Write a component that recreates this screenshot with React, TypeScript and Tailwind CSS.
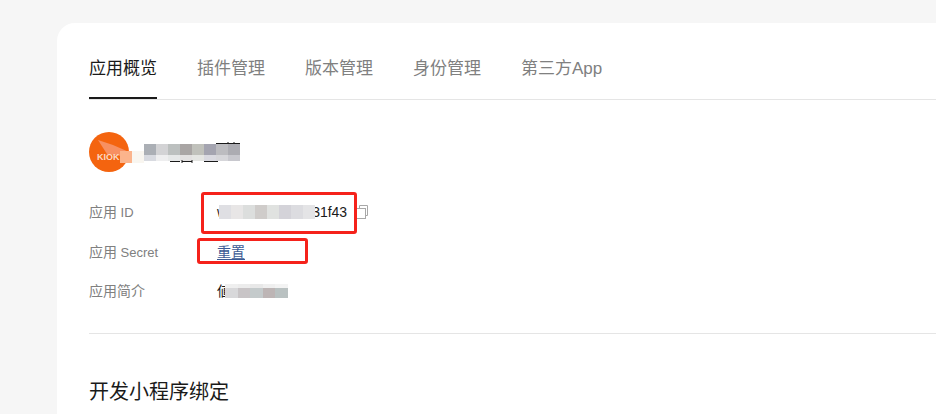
const TABS = ['应用概览', '插件管理', '版本管理', '身份管理', '第三方App']

const NAME_TOP = [
  'bg-[#abafb5]',
  'bg-[#d3d3d5]',
  'bg-[#bcc0bf]',
  'bg-[#a9a5a4]',
  'bg-[#c0c1bb]',
  'bg-[#a4a4b0]',
  'bg-[#bcbcc0]',
  'bg-[#acacb2]',
]

const NAME_BOTTOM = [
  'bg-[#d8dae0]',
  'bg-[#eeeeef]',
  'bg-[#e6e8e8]',
  'bg-[#e2e0e0]',
  'bg-[#e4e5e2]',
  'bg-[#d9d9e0]',
  'bg-[#d6d6da]',
  'bg-[#c8c8ce]',
]

const ID_BLOCKS = [
  'bg-[#dfdfe3]',
  'bg-[#e8e6e6]',
  'bg-[#dcdedd]',
  'bg-[#cfccca]',
  'bg-[#e0e2e0]',
  'bg-[#d4d3d9]',
  'bg-[#dcdce0]',
  'bg-[#e4e4e6]',
]

const INTRO_TOP = ['bg-[#efefef]', 'bg-[#ececec]', 'bg-[#e8e8e8]', 'bg-[#efefef]', 'bg-[#f3f3f3]']
const INTRO_BOTTOM = ['bg-[#d8d8da]', 'bg-[#c8c4c6]', 'bg-[#c4cacb]', 'bg-[#bdb5b5]', 'bg-[#b9c1c1]']

function Mosaic({ blocks, className }: { blocks: string[]; className: string }) {
  return (
    <span className={`relative flex ${className}`}>
      {blocks.map((b, i) => (
        <span key={i} className={`flex-1 ${b}`} />
      ))}
    </span>
  )
}

function CopyIcon() {
  return (
    <svg width="12" height="14" viewBox="0 0 12 14" fill="none" stroke="#a8a8a8" className="ml-[9px]">
      <path d="M3.5 3.5V0.5H11.5V10.5H9.5" />
      <rect x="0.5" y="3.5" width="9" height="10" />
    </svg>
  )
}

export default function App() {
  return (
    <div className="h-[414px] w-[936px] overflow-hidden bg-[#f6f6f6] pl-[57px] pt-[23px] font-['Liberation_Sans','Noto_Sans_CJK_SC',sans-serif]">
      <div className="h-[500px] w-[1000px] rounded-tl-[18px] bg-white pl-[32px] pt-[28px]">
        {/* Tabs */}
        <div className="flex h-[49px] gap-[40px] border-b border-[#e5e5e5]">
          {TABS.map((tab, i) => (
            <div
              key={tab}
              className={
                i === 0
                  ? 'h-[48px] border-b-2 border-[#1a1a1a] text-[17px] leading-[36px] text-[#1a1a1a]'
                  : 'text-[17px] leading-[36px] text-[#808080]'
              }
            >
              {tab}
            </div>
          ))}
        </div>

        {/* App name */}
        <div className="mt-[32px] flex h-[40px] items-start">
          <div className="relative h-[40px] w-[40px] shrink-0 overflow-hidden rounded-full bg-[#f4640f]">
            <svg viewBox="0 0 40 40" className="absolute inset-0 h-full w-full">
              <path d="M9 8 L24 13 L40 20 L32 24 L18 22 Z" fill="#f79062" />
            </svg>
            <span className="absolute left-[8px] top-[20px] text-[9px] font-bold leading-[11px] text-[#fbd9c4]">KIOK</span>
          </div>
          <span className="relative ml-[-9px] mt-[19px] h-[12px] w-[12px] bg-[#fbb48c]" />
          <span className="mt-[19px] h-[12px] w-[12px] bg-[#f9f6f0]" />
          <div className="relative mt-[12px] w-[96px]">
            <Mosaic blocks={NAME_TOP} className="h-[11px]" />
            <Mosaic blocks={NAME_BOTTOM} className="h-[6px]" />
            {/* bits of the name showing past the mosaic */}
            <svg width="96" height="22" viewBox="0 0 96 22" fill="none" stroke="#1a1a1a" className="absolute -top-[2px] left-0">
              <path d="M72 1.5H78M84 0V2M90 0V2M75 1.5H96" strokeWidth="1" />
              <path d="M26 19.5H36M38 19.5H48M38 18V21M48 18V21M60 19.5H74" strokeWidth="1" />
            </svg>
          </div>
        </div>

        {/* Info rows */}
        <div className="mt-[30px] flex h-[20px] items-center text-[14px] text-[#808080]">
          <div className="w-[128px]">
            应用<span className="text-[13px]"> ID</span>
          </div>
          <div className="flex items-center text-[#1a1a1a]">
            <span>w</span>
            <Mosaic blocks={ID_BLOCKS} className="ml-[-8px] h-[14px] w-[96px]" />
            <span className="ml-[-3px]">31f43</span>
            <CopyIcon />
          </div>
        </div>
        <div className="mt-[20px] flex h-[20px] items-center text-[14px] text-[#808080]">
          <div className="w-[128px]">
            应用<span className="text-[13px]"> Secret</span>
          </div>
          <div className="text-[#3b5a94] underline underline-offset-2">重置</div>
        </div>
        <div className="mt-[19px] flex h-[20px] items-center text-[14px] text-[#808080]">
          <div className="w-[128px]">应用简介</div>
          <div className="flex items-center text-[#1a1a1a]">
            <span>値</span>
            <div className="relative ml-[-6px] w-[63px]">
              <Mosaic blocks={INTRO_TOP} className="h-[4px]" />
              <Mosaic blocks={INTRO_BOTTOM} className="h-[10px]" />
            </div>
          </div>
        </div>

        <div className="mt-[32px] border-t border-[#e5e5e5]" />

        <h2 className="mt-[44px] text-[20px] font-normal leading-[28px] text-[#1a1a1a]">开发小程序绑定</h2>
      </div>

      {/* Annotation boxes drawn over the screenshot */}
      <div className="absolute left-[201px] top-[192px] h-[42px] w-[156px] rounded-[3px] border-[3px] border-[#f5221b]" />
      <div className="absolute left-[197px] top-[238px] h-[26px] w-[111px] rounded-[3px] border-[3px] border-[#f5221b]" />
    </div>
  )
}
